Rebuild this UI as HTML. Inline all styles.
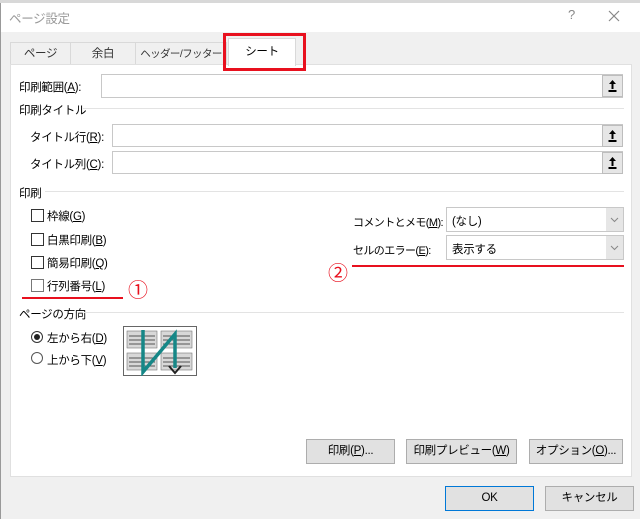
<!DOCTYPE html>
<html><head><meta charset="utf-8"><style>
*{margin:0;padding:0;box-sizing:border-box}
body{width:640px;height:519px;background:#f0f0f0;font-family:"Liberation Sans","Noto Sans CJK JP",sans-serif;font-size:11.5px;letter-spacing:-0.3px;color:#000;position:relative;overflow:hidden}
.a{position:absolute;white-space:nowrap}
.inp{position:absolute;background:#fff;border:1px solid #c8c8c8}
.upb{position:absolute;width:21px;height:22px;background:#e6e6e6;border:1px solid #bdbdbd}
.cb{position:absolute;width:13px;height:13px;border:1px solid #333;background:#fff}
.btn{position:absolute;background:#e1e1e1;border:1px solid #adadad;text-align:center;line-height:23px;height:25px}
.sep{position:absolute;height:1px;background:#e3e3e3}
u{text-decoration:underline}
</style></head><body>
<div class="a" style="left:0;top:0;width:640px;height:3px;background:#d8d8d8"></div>
<div class="a" style="left:0;top:3px;width:640px;height:29px;background:#fff"></div>
<div class="a" style="left:0;top:3px;width:1px;height:516px;background:#999"></div>
<div class="a" style="left:9px;top:8px;color:#999;font-size:12.5px">ページ設定</div>
<div class="a" style="left:568px;top:7px;color:#888;font-size:13px">?</div>
<svg class="a" style="left:290px;top:0" width="0" height="0"></svg>
<svg class="a" style="left:608px;top:10px" width="12" height="12"><path d="M1 1L11 11M11 1L1 11" stroke="#888" stroke-width="1.2"/></svg>
<!-- tabs -->
<div class="a" style="left:10px;top:42px;width:61px;height:23px;border:1px solid #d9d9d9;border-bottom:none;text-align:center;line-height:22px;color:#333">ページ</div>
<div class="a" style="left:71px;top:42px;width:65px;height:23px;border:1px solid #d9d9d9;border-bottom:none;border-left:none;text-align:center;line-height:22px;color:#333">余白</div>
<div class="a" style="left:136px;top:42px;width:91px;height:23px;border:1px solid #d9d9d9;border-bottom:none;border-left:none;text-align:center;line-height:22px;color:#333;font-size:10.5px;letter-spacing:-0.6px">ヘッダー/フッター</div>
<div class="a" style="left:10px;top:64px;width:622px;height:413px;background:#fff;border:1px solid #e0e0e0"></div>
<div class="a" style="left:228px;top:38px;width:68px;height:28px;background:#fff;border:1px solid #d9d9d9;border-bottom:none;text-align:center;line-height:26px">シート</div>
<div class="a" style="left:223px;top:33px;width:83px;height:38px;border:3px solid #e8101e"></div>
<!-- print area -->
<div class="a" style="left:19px;top:79px">印刷範囲(<u>A</u>):</div>
<div class="inp" style="left:101px;top:74px;width:522px;height:24px"></div>
<div class="upb" style="left:602px;top:75px"><svg width="19" height="20"><path d="M9.5 4L6 8h2.5v5h2V8H13z M5.5 14h8v2h-8z" fill="#000"/></svg></div>
<div class="a" style="left:19px;top:102px">印刷タイトル</div>
<div class="sep" style="left:83px;top:108px;width:541px"></div>
<div class="a" style="left:30px;top:129px">タイトル行(<u>R</u>):</div>
<div class="inp" style="left:112px;top:124px;width:511px;height:23px"></div>
<div class="upb" style="left:602px;top:125px"><svg width="19" height="20"><path d="M9.5 4L6 8h2.5v5h2V8H13z M5.5 14h8v2h-8z" fill="#000"/></svg></div>
<div class="a" style="left:30px;top:156px">タイトル列(<u>C</u>):</div>
<div class="inp" style="left:112px;top:151px;width:511px;height:23px"></div>
<div class="upb" style="left:602px;top:152px"><svg width="19" height="20"><path d="M9.5 4L6 8h2.5v5h2V8H13z M5.5 14h8v2h-8z" fill="#000"/></svg></div>
<div class="a" style="left:19px;top:185px">印刷</div>
<div class="sep" style="left:45px;top:191px;width:579px"></div>
<div class="cb" style="left:31px;top:209px"></div><div class="a" style="left:47px;top:208px">枠線(<u>G</u>)</div>
<div class="cb" style="left:31px;top:233px"></div><div class="a" style="left:47px;top:232px">白黒印刷(<u>B</u>)</div>
<div class="cb" style="left:31px;top:256px"></div><div class="a" style="left:47px;top:255px">簡易印刷(<u>Q</u>)</div>
<div class="cb" style="left:31px;top:279px;border-color:#777"></div><div class="a" style="left:47px;top:278px">行列番号(<u>L</u>)</div>
<div class="a" style="left:22px;top:297px;width:101px;height:2px;background:#e8101e"></div>
<div class="a" style="left:128px;top:274px;color:#e8101e;font-size:20px">①</div>
<div class="a" style="left:19px;top:306px">ページの方向</div>
<div class="sep" style="left:84px;top:312px;width:540px"></div>
<div class="a" style="left:31px;top:331px;width:12px;height:12px;border:1px solid #333;border-radius:50%;background:#fff"><div style="margin:2px;width:6px;height:6px;border-radius:50%;background:#222"></div></div>
<div class="a" style="left:47px;top:330px">左から右(<u>D</u>)</div>
<div class="a" style="left:31px;top:352px;width:12px;height:12px;border:1px solid #555;border-radius:50%;background:#fff"></div>
<div class="a" style="left:47px;top:352px">上から下(<u>V</u>)</div>
<svg class="a" style="left:123px;top:326px" width="74" height="50" viewBox="0 0 74 50">
<rect x="0.5" y="0.5" width="73" height="49" fill="#fff" stroke="#666"/>
<g fill="#d8d8d8" stroke="#777" stroke-width="0.6">
<rect x="4" y="5" width="30" height="17"/><rect x="38" y="5" width="31" height="17"/>
<rect x="4" y="27" width="30" height="17"/><rect x="38" y="27" width="31" height="17"/>
</g>
<g stroke="#555" stroke-width="1"><path d="M6 10h26M6 14h26M6 18h26M40 10h27M40 14h27M40 18h27M6 32h26M6 36h26M6 40h26M40 32h27M40 36h27M40 40h27"/></g>
<path d="M20 4V46L52 8V42" fill="none" stroke="#168787" stroke-width="3.5"/>
<path d="M46 40l6 7 6-7" fill="none" stroke="#222" stroke-width="2"/>
</svg>
<!-- right -->
<div class="a" style="left:353px;top:214px;font-size:11px;letter-spacing:-0.6px">コメントとメモ(<u>M</u>):</div>
<div class="inp" style="left:446px;top:207px;width:178px;height:25px;padding:5px 5px">(なし)</div>
<div class="a" style="left:606px;top:208px;width:17px;height:23px;background:#e6e6e6"><svg width="17" height="23"><path d="M5 10l3.5 3.5L12 10" fill="none" stroke="#888"/></svg></div>
<div class="a" style="left:353px;top:242px;font-size:11px;letter-spacing:-0.6px">セルのエラー(<u>E</u>):</div>
<div class="inp" style="left:446px;top:235px;width:178px;height:25px;padding:5px 5px">表示する</div>
<div class="a" style="left:606px;top:236px;width:17px;height:23px;background:#e6e6e6"><svg width="17" height="23"><path d="M5 10l3.5 3.5L12 10" fill="none" stroke="#888"/></svg></div>
<div class="a" style="left:352px;top:265px;width:272px;height:2px;background:#e8101e"></div>
<div class="a" style="left:328px;top:257px;color:#e8101e;font-size:20px">②</div>
<!-- buttons -->
<div class="btn" style="left:306px;top:439px;width:89px">印刷(<u>P</u>)...</div>
<div class="btn" style="left:406px;top:439px;width:111px">印刷プレビュー(<u>W</u>)</div>
<div class="btn" style="left:529px;top:439px;width:94px">オプション(<u>O</u>)...</div>
<div class="btn" style="left:445px;top:486px;width:89px;border:1px solid #0078d7">OK</div>
<div class="btn" style="left:545px;top:486px;width:89px">キャンセル</div>
</body></html>
